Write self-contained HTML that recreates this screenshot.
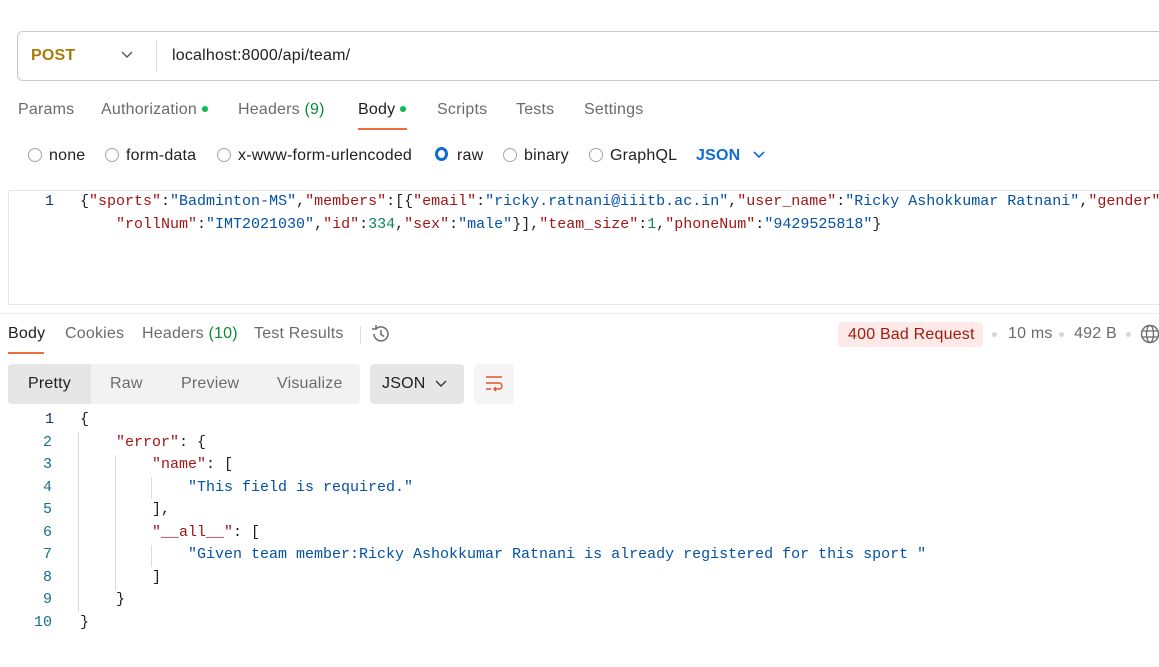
<!DOCTYPE html>
<html><head><meta charset="utf-8"><style>
*{margin:0;padding:0;box-sizing:border-box}
body{width:1159px;height:667px;overflow:hidden;background:#fff;font-family:"Liberation Sans",sans-serif;color:#212121;position:relative}
.a{position:absolute;white-space:nowrap}
.f{font-size:16px;letter-spacing:0.2px}
.t{font-size:16px;letter-spacing:0.2px;color:#6b6b6b}
.mono{font-family:"Liberation Mono",monospace;font-size:15px;white-space:pre}
.k{color:#a31515}.s{color:#0451a5}.n{color:#098658}.p{color:#212121}
.ln{color:#1a6d8f;text-align:right;width:20px;font-family:"Liberation Mono",monospace;font-size:15px}
.dot{display:inline-block;width:6px;height:6px;border-radius:3px;background:#0cbb52;margin-left:5px;vertical-align:2px}
.radio{position:absolute;width:14px;height:14px;border:1px solid #a6a6a6;border-radius:50%}
.g{position:absolute;width:1px;background:#dcdcdc}
</style></head><body>
<div class="a" style="left:17px;top:31px;width:1160px;height:50px;border:1px solid #c9c9c9;border-radius:6px"></div>
<div class="a f" style="left:31px;top:47px;font-weight:bold;color:#ad7a03">POST</div>
<svg class="a" style="left:121px;top:50px" width="12" height="10"><path d="M1 2l5 5 5-5" fill="none" stroke="#555" stroke-width="1.4"/></svg>
<div class="a" style="left:156px;top:41px;width:1px;height:30px;background:#e0e0e0"></div>
<div class="a f" style="left:172px;top:47px;color:#212121">localhost:8000/api/team/</div>

<div class="a t" style="left:18px;top:101px">Params</div>
<div class="a t" style="left:101px;top:101px">Authorization<span class="dot"></span></div>
<div class="a t" style="left:238px;top:101px">Headers <span style="color:#0a8a3a">(9)</span></div>
<div class="a t" style="left:358px;top:101px;color:#212121">Body<span class="dot"></span></div>
<div class="a" style="left:358px;top:128px;width:49px;height:2px;background:#f26b3a"></div>
<div class="a t" style="left:437px;top:101px">Scripts</div>
<div class="a t" style="left:516px;top:101px">Tests</div>
<div class="a t" style="left:584px;top:101px">Settings</div>

<div class="radio" style="left:28px;top:148px"></div><div class="a f" style="left:49px;top:147px">none</div>
<div class="radio" style="left:105px;top:148px"></div><div class="a f" style="left:126px;top:147px">form-data</div>
<div class="radio" style="left:217px;top:148px"></div><div class="a f" style="left:238px;top:147px">x-www-form-urlencoded</div>
<div class="radio" style="left:435px;top:147px;border:3px solid #0e6bd6;width:13px;height:14px"></div><div class="a f" style="left:457px;top:147px">raw</div>
<div class="radio" style="left:503px;top:148px"></div><div class="a f" style="left:524px;top:147px">binary</div>
<div class="radio" style="left:589px;top:148px"></div><div class="a f" style="left:610px;top:147px">GraphQL</div>
<div class="a f" style="left:696px;top:147px;font-weight:bold;color:#0e6bd6">JSON</div>
<svg class="a" style="left:753px;top:150px" width="12" height="10"><path d="M1 2l5 5 5-5" fill="none" stroke="#0e6bd6" stroke-width="1.6"/></svg>

<div class="a" style="left:8px;top:190px;width:1160px;height:115px;border:1px solid #e6e6e6;border-right:none"></div>
<div class="a ln" style="left:34px;top:193px;color:#1c2f6b">1</div>
<div class="a mono" style="left:80px;top:193px"><span class="p">{</span><span class="k">"sports"</span>:<span class="s">"Badminton-MS"</span>,<span class="k">"members"</span>:[{<span class="k">"email"</span>:<span class="s">"ricky.ratnani@iiitb.ac.in"</span>,<span class="k">"user_name"</span>:<span class="s">"Ricky Ashokkumar Ratnani"</span>,<span class="k">"gender"</span></div>
<div class="a mono" style="left:116px;top:216px"><span class="k">"rollNum"</span>:<span class="s">"IMT2021030"</span>,<span class="k">"id"</span>:<span class="n">334</span>,<span class="k">"sex"</span>:<span class="s">"male"</span>}],<span class="k">"team_size"</span>:<span class="n">1</span>,<span class="k">"phoneNum"</span>:<span class="s">"9429525818"</span>}</div>

<div class="a" style="left:0;top:313px;width:1159px;height:1px;background:#ececec"></div>
<div class="a f" style="left:8px;top:325px;color:#212121">Body</div>
<div class="a" style="left:8px;top:352px;width:36px;height:2px;background:#f26b3a"></div>
<div class="a t" style="left:65px;top:325px">Cookies</div>
<div class="a t" style="left:142px;top:325px">Headers <span style="color:#0a8a3a">(10)</span></div>
<div class="a t" style="left:254px;top:325px">Test Results</div>
<div class="a" style="left:360px;top:326px;width:1px;height:18px;background:#e0e0e0"></div>
<svg class="a" style="left:370px;top:323px" width="22" height="22" viewBox="0 0 22 22"><path d="M4 11a7 7 0 1 0 2-5" fill="none" stroke="#6b6b6b" stroke-width="1.5"/><path d="M6 2v4h-4" fill="none" stroke="#6b6b6b" stroke-width="1.5"/><path d="M11 7v4.5l3 2" fill="none" stroke="#6b6b6b" stroke-width="1.5"/></svg>
<div class="a" style="left:838px;top:322px;width:145px;height:25px;background:#fde9e7;border-radius:4px"></div>
<div class="a f" style="left:848px;top:326px;color:#a11b10">400 Bad Request</div>
<div class="a" style="left:992px;top:332px;width:5px;height:5px;border-radius:3px;background:#d6d6d6"></div>
<div class="a t" style="left:1008px;top:325px">10 ms</div>
<div class="a" style="left:1059px;top:332px;width:5px;height:5px;border-radius:3px;background:#d6d6d6"></div>
<div class="a t" style="left:1074px;top:325px">492 B</div>
<div class="a" style="left:1126px;top:332px;width:5px;height:5px;border-radius:3px;background:#d6d6d6"></div>
<svg class="a" style="left:1140px;top:324px" width="20" height="20" viewBox="0 0 20 20"><circle cx="10" cy="10" r="8.5" fill="none" stroke="#6b6b6b" stroke-width="1.4"/><ellipse cx="10" cy="10" rx="3.5" ry="8.5" fill="none" stroke="#6b6b6b" stroke-width="1.3"/><path d="M2 7h16M2 13h16" stroke="#6b6b6b" stroke-width="1.3"/></svg>

<div class="a" style="left:8px;top:364px;width:352px;height:40px;background:#f2f2f2;border-radius:4px"></div>
<div class="a" style="left:8px;top:364px;width:83px;height:40px;background:#e6e6e6;border-radius:4px 0 0 4px"></div>
<div class="a f" style="left:28px;top:375px;color:#212121">Pretty</div>
<div class="a t" style="left:110px;top:375px">Raw</div>
<div class="a t" style="left:181px;top:375px">Preview</div>
<div class="a t" style="left:277px;top:375px">Visualize</div>
<div class="a" style="left:370px;top:364px;width:94px;height:40px;background:#e6e6e6;border-radius:4px"></div>
<div class="a f" style="left:382px;top:375px;color:#212121">JSON</div>
<svg class="a" style="left:435px;top:379px" width="12" height="10"><path d="M1 2l5 5 5-5" fill="none" stroke="#333" stroke-width="1.4"/></svg>
<div class="a" style="left:474px;top:364px;width:40px;height:40px;background:#f5f5f5;border-radius:4px"></div>
<svg class="a" style="left:484px;top:374px" width="20" height="20" viewBox="0 0 20 20"><path d="M2 3h16M2 9h13a3 3 0 0 1 0 6h-5M12 13l-2 2 2 2M2 15h5" fill="none" stroke="#e0552b" stroke-width="1.4"/></svg>

<div class="g" style="left:78px;top:432px;height:180px"></div>
<div class="g" style="left:115px;top:455px;height:135px"></div>
<div class="g" style="left:151px;top:477px;height:22px"></div>
<div class="g" style="left:151px;top:545px;height:22px"></div>

<div class="a ln" style="left:34px;top:411px;color:#1c2f6b">1</div>
<div class="a ln" style="left:32px;top:433.5px">2</div>
<div class="a ln" style="left:32px;top:456px">3</div>
<div class="a ln" style="left:32px;top:478.5px">4</div>
<div class="a ln" style="left:32px;top:501px">5</div>
<div class="a ln" style="left:32px;top:523.5px">6</div>
<div class="a ln" style="left:32px;top:546px">7</div>
<div class="a ln" style="left:32px;top:568.5px">8</div>
<div class="a ln" style="left:32px;top:591px">9</div>
<div class="a ln" style="left:32px;top:613.5px">10</div>

<div class="a mono" style="left:80px;top:411px">{</div>
<div class="a mono" style="left:116px;top:433.5px"><span class="k">"error"</span>: {</div>
<div class="a mono" style="left:152px;top:456px"><span class="k">"name"</span>: [</div>
<div class="a mono" style="left:188px;top:478.5px"><span class="s">"This field is required."</span></div>
<div class="a mono" style="left:152px;top:501px">],</div>
<div class="a mono" style="left:152px;top:523.5px"><span class="k">"__all__"</span>: [</div>
<div class="a mono" style="left:188px;top:546px"><span class="s">"Given team member:Ricky Ashokkumar Ratnani is already registered for this sport "</span></div>
<div class="a mono" style="left:152px;top:568.5px">]</div>
<div class="a mono" style="left:116px;top:591px">}</div>
<div class="a mono" style="left:80px;top:613.5px">}</div>
</body></html>
